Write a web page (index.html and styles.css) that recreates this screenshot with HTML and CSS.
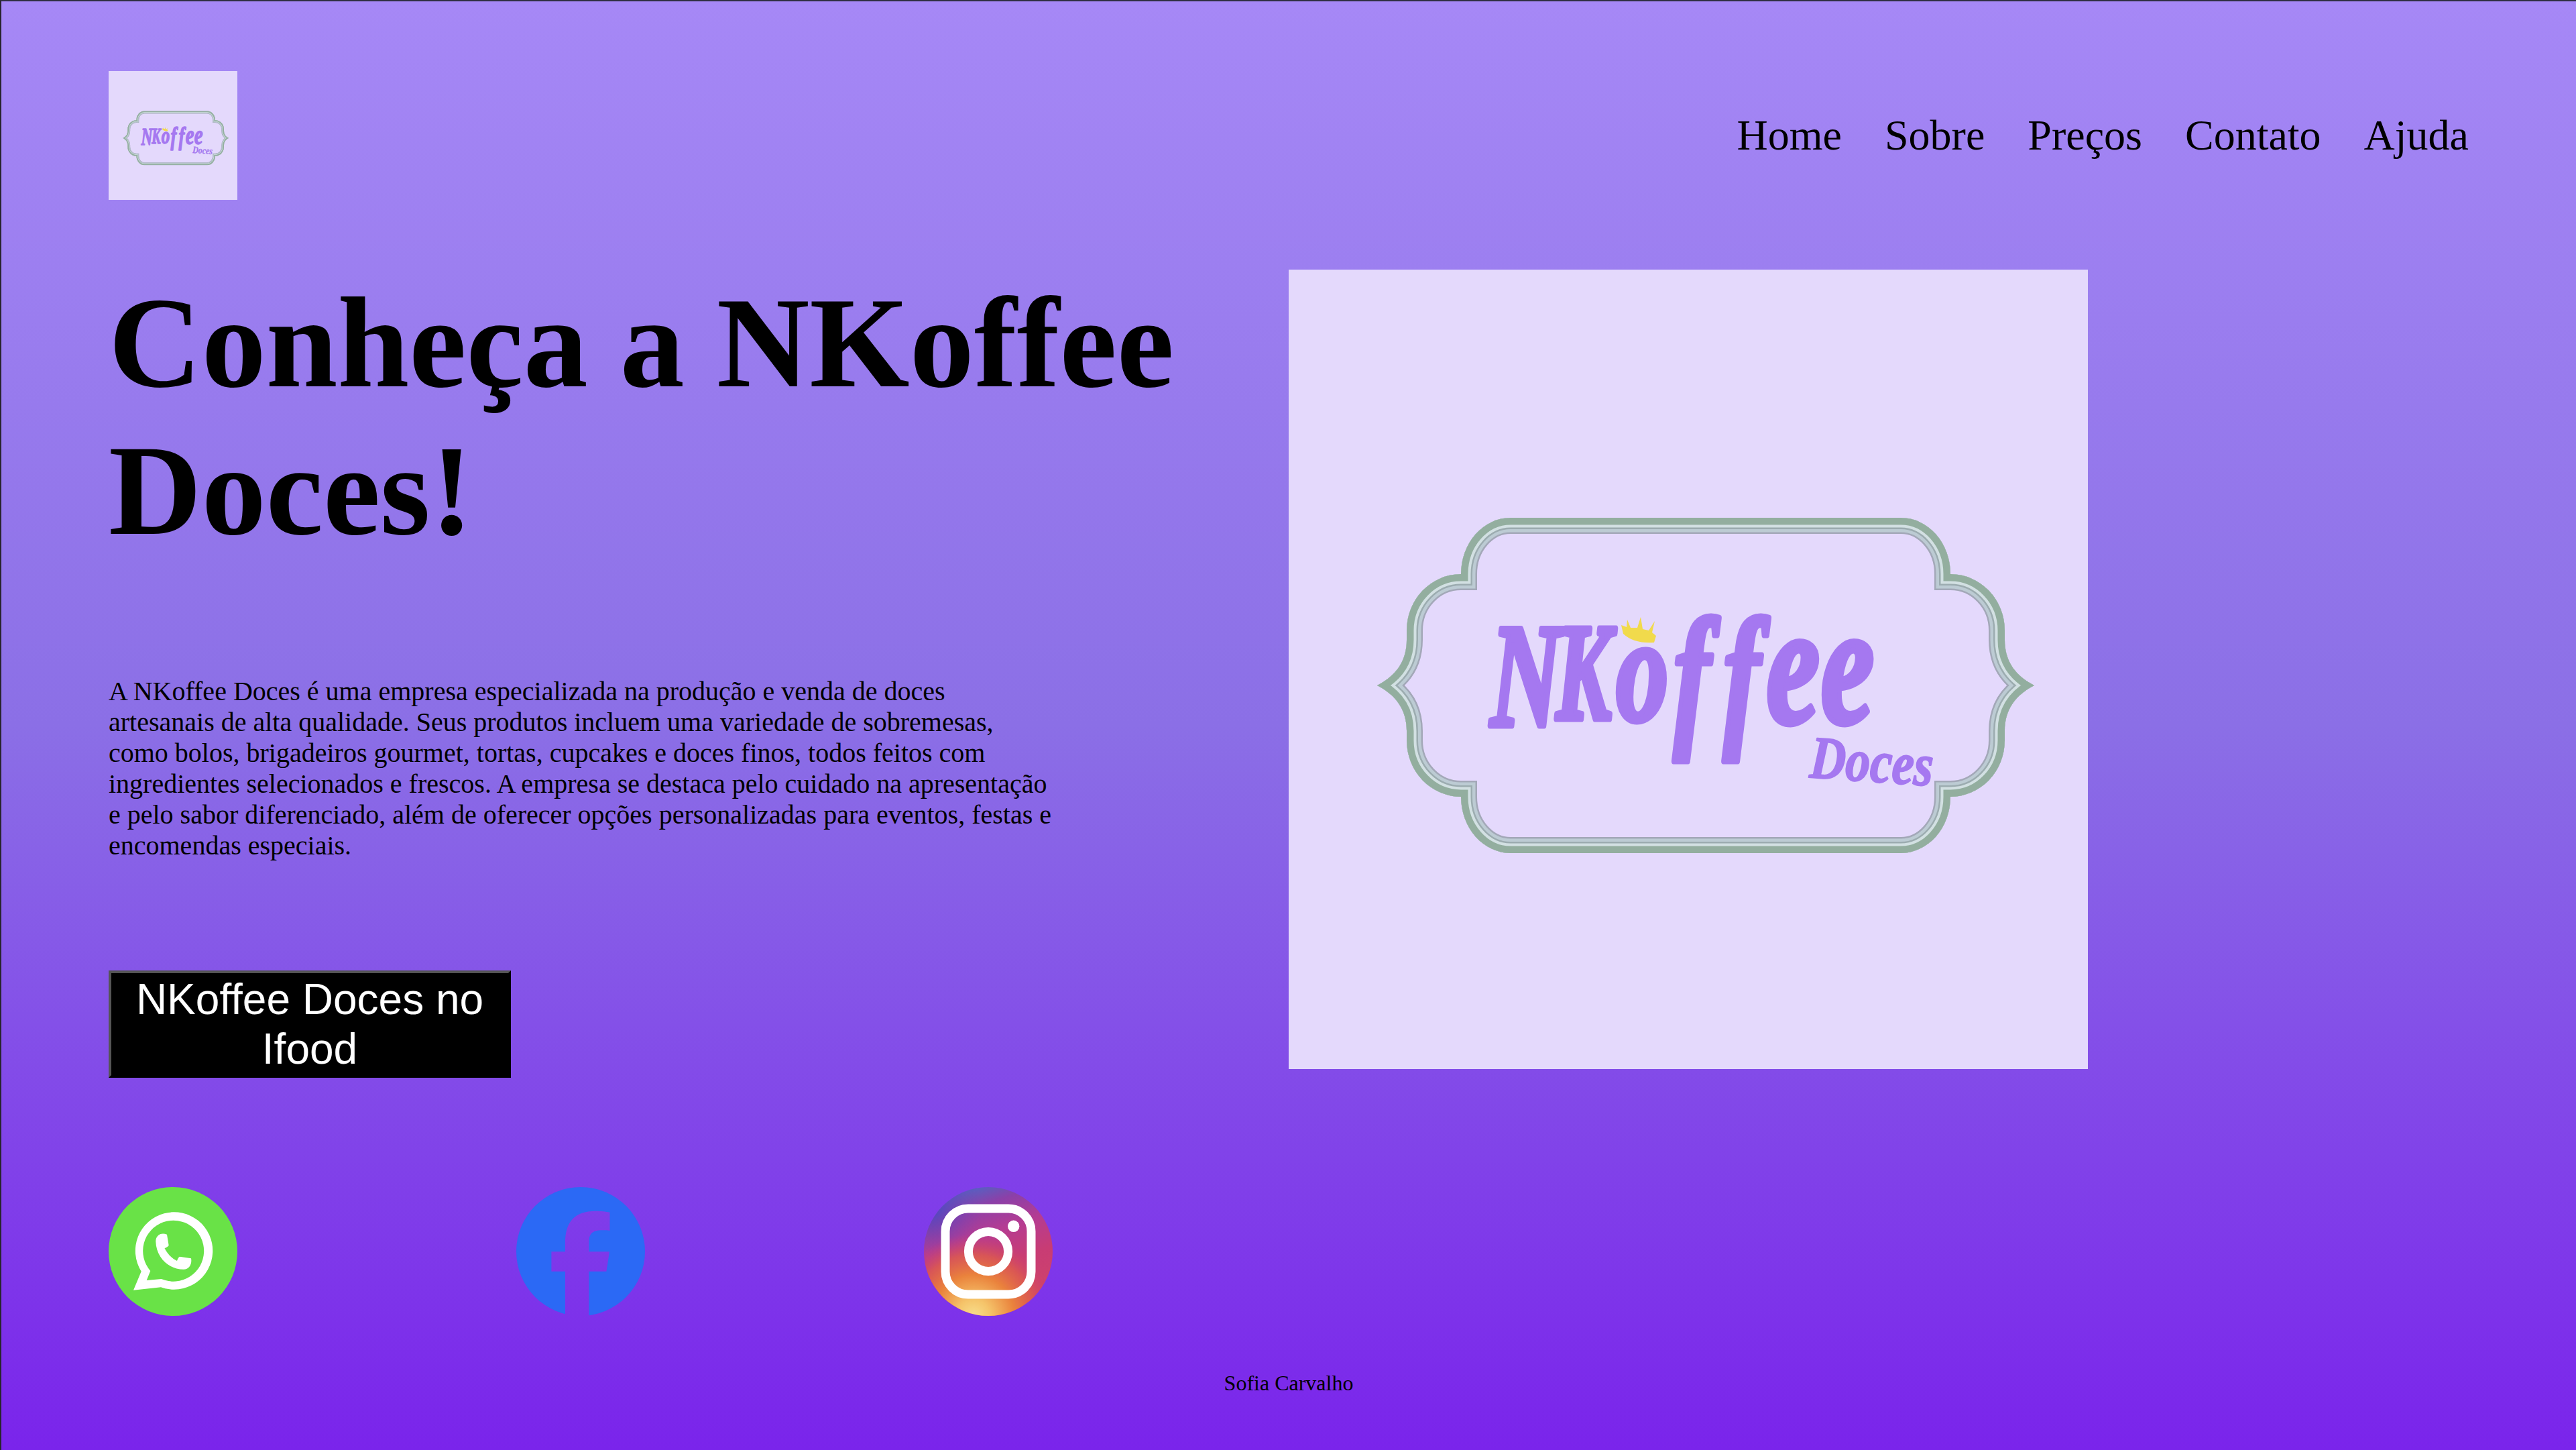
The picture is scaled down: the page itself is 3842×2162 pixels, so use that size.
FILE: index.html
```html
<!DOCTYPE html>
<html lang="pt-BR">
<head>
<meta charset="utf-8">
<title>NKoffee Doces</title>
<link rel="stylesheet" href="styles.css">
</head>
<body>
<svg class="defs" width="0" height="0" aria-hidden="true">
  <defs>
    <path id="frame" d="M331 370H913A74 84 0 0 1 987 454A81 84 0 0 1 1068 538V552C1068 585 1085 606 1112 620C1085 634 1068 655 1068 688V702A81 84 0 0 1 987 786A74 84 0 0 1 913 870H331A74 84 0 0 1 257 786A81 84 0 0 1 176 702V688C176 655 159 634 132 620C159 606 176 585 176 552V538A81 84 0 0 1 257 454A74 84 0 0 1 331 370Z"/>
    <clipPath id="frame-clip"><use href="#frame"/></clipPath>
    <symbol id="logo" viewBox="0 0 1192 1192">
      <rect width="1192" height="1192" fill="#e4d9fc"/>
      <g clip-path="url(#frame-clip)" fill="none" stroke-miterlimit="8">
        <use href="#frame" stroke="#a3a8b8" stroke-width="48"/>
        <use href="#frame" stroke="#bccbd3" stroke-width="43"/>
        <use href="#frame" stroke="#9cacb0" stroke-width="34"/>
        <use href="#frame" stroke="#d2e0e2" stroke-width="29"/>
        <use href="#frame" stroke="#93ae9f" stroke-width="21"/>
      </g>
      <text class="word" transform="scale(.7 1)" stroke-width="9"><tspan x="430" y="680" font-size="220" textLength="150" lengthAdjust="spacingAndGlyphs">N</tspan><tspan x="570" y="670" font-size="205" textLength="118" lengthAdjust="spacingAndGlyphs">K</tspan><tspan x="698" y="672" font-size="222">o</tspan><tspan x="820" y="683" font-size="236">f</tspan><tspan x="926" y="683" font-size="236">f</tspan><tspan x="1018" y="675" font-size="256">e</tspan><tspan x="1134" y="675" font-size="256">e</tspan></text>
      <text class="word" transform="translate(776 757) rotate(4)" font-size="90" stroke-width="2" textLength="184" lengthAdjust="spacingAndGlyphs">Doces</text>
      <path d="M496 530L504 533L505 522L510 534L520 534L525 518L528 536L537 538L546 524L542 541L548 546L545 556Q515 558 499 543Z" fill="#f1da4c"/>
    </symbol>
  </defs>
</svg>

<header class="header">
  <svg class="brand" role="img" aria-label="NKoffee Doces"><use href="#logo"/></svg>
  <nav class="nav">
    <a>Home</a><a>Sobre</a><a>Preços</a><a>Contato</a><a>Ajuda</a>
  </nav>
</header>

<main class="main">
  <section class="intro">
    <h1>Conheça a NKoffee Doces!</h1>
    <p>A NKoffee Doces é uma empresa especializada na produção e venda de doces artesanais de alta qualidade. Seus produtos incluem uma variedade de sobremesas, como bolos, brigadeiros gourmet, tortas, cupcakes e doces finos, todos feitos com ingredientes selecionados e frescos. A empresa se destaca pelo cuidado na apresentação e pelo sabor diferenciado, além de oferecer opções personalizadas para eventos, festas e encomendas especiais.</p>
    <button class="order">NKoffee Doces no Ifood</button>
    <div class="social">
      <svg viewBox="0 0 192 192">
        <circle cx="96" cy="96" r="96" fill="#69e247"/>
        <path fill="#fff" fill-rule="evenodd" d="M48.7 125.7A57.7 57.7 0 1 1 78 149.3L37 153.7ZM62.3 125L56.7 139L78.7 137A45.5 45.5 0 1 0 62.3 125Z"/>
        <path fill="#fff" d="M87 70.7C78 67 70.3 72 70.3 81C71 104 88 122.500 112 122.700C120 122.700 124.700 115 123 106.200L106 103.700C104 105 103 107 102 110C94 106 87 99 83.500 91C86 90.500 88 89 89.700 87Z"/>
      </svg>
      <svg viewBox="0 0 192 192">
        <mask id="fb-cut">
          <rect width="192" height="192" fill="#fff"/>
          <path fill="#000" d="M73 192V125.700H52.400V96.300H73V83C73 52 87 35.700 118 35.700C127 35.700 133 36.400 139.500 37.700V64.700C136 64.300 133 64.200 128 64.200C114 64.200 108.400 69 108.400 82V96.300H139L134.400 125.700H108.400V192Z"/>
        </mask>
        <circle cx="96" cy="96" r="96" fill="#2b69f5" mask="url(#fb-cut)"/>
      </svg>
      <svg viewBox="0 0 192 192">
        <defs>
          <linearGradient id="ig-base" x1=".3" y1="0" x2=".62" y2="1">
            <stop offset="0" stop-color="#4a68c8"/><stop offset=".17" stop-color="#8b40a8"/><stop offset=".38" stop-color="#b53c92"/><stop offset=".62" stop-color="#c83c74"/><stop offset="1" stop-color="#d0446a"/>
          </linearGradient>
          <radialGradient id="ig-warm" gradientUnits="userSpaceOnUse" cx="74" cy="192" r="122" gradientTransform="rotate(-14 74 192)">
            <stop offset="0" stop-color="#f8de8c"/><stop offset=".2" stop-color="#f5c46a"/><stop offset=".5" stop-color="#ea823c"/><stop offset=".75" stop-color="#de5c4c" stop-opacity=".8"/><stop offset="1" stop-color="#cc3c70" stop-opacity="0"/>
          </radialGradient>
          <radialGradient id="ig-cool" gradientUnits="userSpaceOnUse" cx="10" cy="30" r="75">
            <stop offset="0" stop-color="#4a48c4"/><stop offset="1" stop-color="#7a40b0" stop-opacity="0"/>
          </radialGradient>
        </defs>
        <circle cx="96" cy="96" r="96" fill="url(#ig-base)"/>
        <circle cx="96" cy="96" r="96" fill="url(#ig-cool)"/>
        <circle cx="96" cy="96" r="96" fill="url(#ig-warm)"/>
        <g fill="none" stroke="#fff" stroke-width="13">
          <rect x="32" y="32" width="128" height="128" rx="34"/>
          <circle cx="96" cy="96" r="29.600"/>
        </g>
        <circle cx="133.700" cy="58.300" r="8.700" fill="#fff"/>
      </svg>
    </div>
  </section>
  <svg class="hero" role="img" aria-label="NKoffee Doces"><use href="#logo"/></svg>
</main>

<footer class="footer">Sofia Carvalho</footer>
</body>
</html>
```
FILE: styles.css
```css
* {
  margin: 0;
  padding: 0;
  box-sizing: border-box;
}

html {
  height: 100%;
}

body {
  height: 2162px;
  border-top: 2px solid #302f42;
  border-left: 2px solid #28242e;
  background: linear-gradient(#a688f6, #8b6fe6 50%, #7a24eb);
  background-origin: border-box;
  color: #000;
  font-family: "Liberation Serif", serif;
  overflow: hidden;
}

svg {
  display: block;
}

.defs {
  position: absolute;
}

.header {
  display: flex;
  justify-content: space-between;
  align-items: center;
  height: 400px;
  padding: 0 160px;
}

.brand {
  width: 192px;
  height: 192px;
}

.nav {
  display: flex;
  gap: 64px;
  font-size: 64px;
  line-height: 74px;
}

.main {
  display: flex;
  justify-content: space-between;
  padding: 0 728px 0 160px;
}

.intro {
  width: 1600px;
}

h1 {
  font-size: 192px;
  line-height: 220px;
}

p {
  width: 1408px;
  margin-top: 166px;
  font-size: 40px;
  line-height: 46px;
}

.order {
  display: block;
  width: 600px;
  height: 160px;
  margin-top: 163px;
  padding: 0 12px;
  border: 4px solid #000;
  border-top-color: #555;
  border-left-color: #555;
  background: #000;
  color: #fff;
  font: 64px/74px "Liberation Sans", sans-serif;
}

.social {
  display: flex;
  justify-content: space-between;
  width: 1408px;
  margin-top: 163px;
}

.social svg {
  width: 192px;
  height: 192px;
}

.hero {
  width: 1192px;
  height: 1192px;
}

.footer {
  margin-top: 82px;
  text-align: center;
  font-size: 32px;
  line-height: 37px;
}

.word {
  fill: #a578f0;
  stroke: #a578f0;
  stroke-linejoin: round;
  font-family: "Liberation Serif", serif;
  font-style: italic;
  font-weight: bold;
}
```
